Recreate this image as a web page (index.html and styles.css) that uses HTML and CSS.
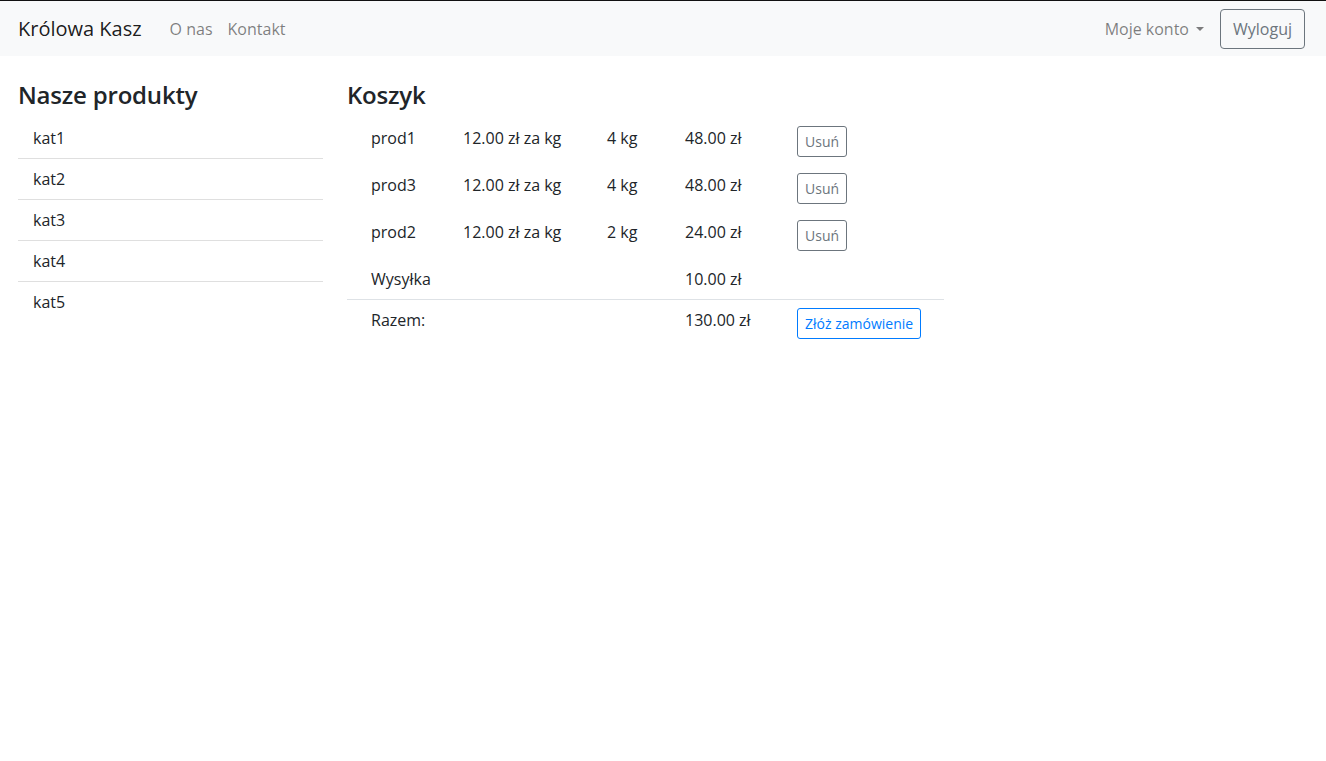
FILE: index.html
```html
<!DOCTYPE html>
<html lang="pl">
<head>
<meta charset="utf-8">
<title>Królowa Kasz</title>
<link rel="stylesheet" href="styles.css">
</head>
<body>
<div class="topline"></div>
<nav class="navbar">
  <a class="brand" href="#">Królowa Kasz</a>
  <ul class="nav">
    <li><a href="#">O nas</a></li>
    <li><a href="#">Kontakt</a></li>
  </ul>
  <div class="nav-right">
    <a class="dropdown" href="#">Moje konto<span class="caret"></span></a>
    <button class="btn btn-secondary">Wyloguj</button>
  </div>
</nav>
<main class="main">
  <aside class="sidebar">
    <h2 class="heading">Nasze produkty</h2>
    <ul class="list">
      <li>kat1</li>
      <li>kat2</li>
      <li>kat3</li>
      <li>kat4</li>
      <li>kat5</li>
    </ul>
  </aside>
  <section class="cart">
    <h2 class="heading">Koszyk</h2>
    <div class="cart-table">
      <div class="row">
        <span>prod1</span><span>12.00 zł za kg</span><span>4 kg</span><span>48.00 zł</span>
        <span><button class="btn btn-sm btn-secondary">Usuń</button></span>
      </div>
      <div class="row">
        <span>prod3</span><span>12.00 zł za kg</span><span>4 kg</span><span>48.00 zł</span>
        <span><button class="btn btn-sm btn-secondary">Usuń</button></span>
      </div>
      <div class="row">
        <span>prod2</span><span>12.00 zł za kg</span><span>2 kg</span><span>24.00 zł</span>
        <span><button class="btn btn-sm btn-secondary">Usuń</button></span>
      </div>
      <div class="row">
        <span>Wysyłka</span><span></span><span></span><span>10.00 zł</span><span></span>
      </div>
      <div class="row total">
        <span>Razem:</span><span></span><span></span><span>130.00 zł</span>
        <span><button class="btn btn-sm btn-primary">Złóż zamówienie</button></span>
      </div>
    </div>
  </section>
</main>
</body>
</html>
```

FILE: styles.css
```css
* { box-sizing: border-box; }
html, body { margin: 0; padding: 0; }
body {
  font-family: "Open Sans", "Noto Sans", sans-serif;
  font-size: 16px;
  line-height: 1.5;
  color: #212529;
  background: #fff;
}
.topline { height: 1px; background: #111; }
.navbar {
  display: flex;
  align-items: center;
  height: 55px;
  padding: 0 21px 0 18px;
  background: #f8f9fa;
}
.brand {
  font-size: 20px;
  color: rgba(0,0,0,.9);
  text-decoration: none;
  margin-right: 28px;
  line-height: 30px;
}
.nav { list-style: none; margin: 0; padding: 0; display: flex; gap: 15px; }
.nav a, .dropdown {
  color: rgba(0,0,0,.5);
  text-decoration: none;
  font-size: 16px;
}
.nav-right { margin-left: auto; display: flex; align-items: center; gap: 16px; }
.dropdown { display: inline-flex; align-items: center; }
.caret {
  display: inline-block;
  margin-left: 7px;
  width: 0; height: 0;
  border-top: 4.5px solid rgba(0,0,0,.5);
  border-left: 4.5px solid transparent;
  border-right: 4.5px solid transparent;
}
.btn {
  font-family: inherit;
  background: transparent;
  border: 1px solid;
  border-radius: 4px;
  font-size: 16px;
  line-height: 24px;
  padding: 7px 12px;
  cursor: pointer;
}
.btn-secondary { color: #6c757d; border-color: #6c757d; }
.btn-primary { color: #007bff; border-color: #007bff; }
.btn-sm { font-size: 14px; line-height: 21px; padding: 4px 7px; border-radius: 3px; }
.main {
  display: flex;
  padding: 24px 0 0 18px;
}
.sidebar { width: 305px; margin-right: 24px; }
.heading {
  font-size: 24px;
  font-weight: 600;
  line-height: 29px;
  margin: 0 0 9px;
  letter-spacing: -0.2px;
}
.list { list-style: none; margin: 0; padding: 0; }
.list li {
  padding: 8px 15px;
  border-bottom: 1px solid rgba(0,0,0,.125);
}
.list li:last-child { border-bottom: none; }
.cart { width: 597px; }
.row {
  display: grid;
  grid-template-columns: 92px 144px 78px 112px 1fr;
  padding: 8px 0 8px 24px;
  align-items: start;
}
.total { border-top: 1px solid #dee2e6; }
```
